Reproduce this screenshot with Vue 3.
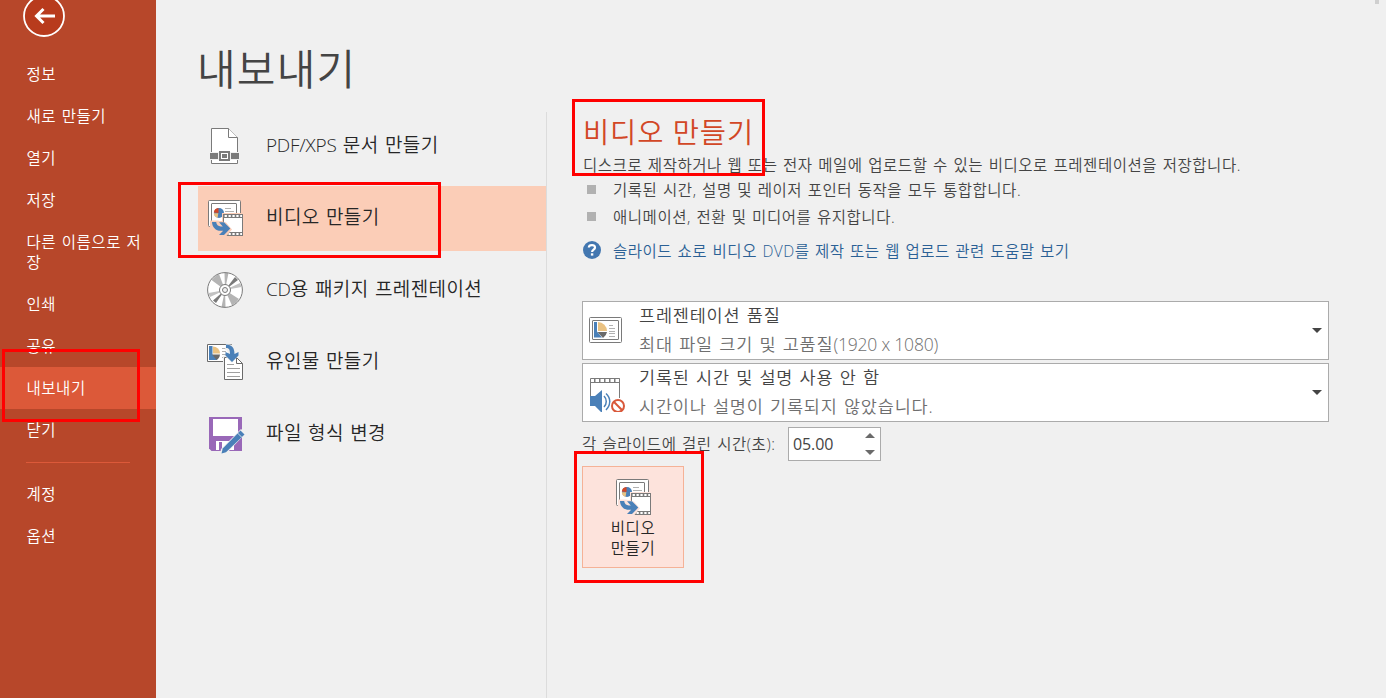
<script setup>
import { h } from 'vue'

const nav = ['정보', '새로 만들기', '열기', '저장', '다른 이름으로 저장', '인쇄', '공유', '내보내기', '닫기']
const navBottom = ['계정', '옵션']
const active = '내보내기'

const exportsList = [
  { id: 'pdf', latin: 'PDF/XPS', label: ' 문서 만들기' },
  { id: 'video', label: '비디오 만들기' },
  { id: 'cd', latin: 'CD', label: '용 패키지 프레젠테이션' },
  { id: 'handout', label: '유인물 만들기' },
  { id: 'file', label: '파일 형식 변경' },
]

const VideoIcon = (props) =>
  h('svg', { width: 36, height: 37, viewBox: '0 0 36 37' }, [
    h('rect', { x: 0.5, y: 0.5, width: 32, height: 26, rx: 1, fill: '#fff', stroke: '#7a7a7a' }),
    h('rect', { x: 3.5, y: 3.5, width: 25, height: 20, rx: 0.5, fill: '#fff', stroke: '#7a7a7a' }),
    h('circle', { cx: 11, cy: 13, r: 5, fill: '#4a80b8' }),
    h('path', { d: 'M10.5 13V8A5 5 0 0 0 5.8 12.6z', fill: '#d24726' }),
    h('path', { d: 'M10.3 13.2H5.8A5 5 0 0 0 9.6 17.8z', fill: '#eac282' }),
    h('path', { d: 'M17 8.5h6M17 11.5h9', stroke: '#b1b1b1' }),
    h('path', { d: 'M14 13h22v24H14z', fill: props.halo }),
    h('path', { d: 'M2 21h13v5l7 3-7 8H9L2 28z', fill: props.halo }),
    h('path', { d: 'M16 15h18v20H16z', fill: '#fff' }),
    h('path', { d: 'M15 14.5h20M15 17.5h20M15 32.5h20M15 35.5h20M15.5 14v21.5M34.5 14v22', stroke: '#7a7a7a', fill: 'none' }),
    h('path', { d: 'M15 16h20M15 34h20', stroke: '#7a7a7a', 'stroke-width': 2, 'stroke-dasharray': '1.6 2.3' }),
    h('path', { d: 'M2 20.5h8l8 2 6 7-6 7H9l-3-5-4-2z', fill: props.halo }),
    h('path', { d: 'M4 22h4.2c.2 2.8 2 4.4 4.6 4.4h2L11 22.3h5l6.3 6.3L16 35h-5l4.2-4.2h-2.5C7.8 30.8 4 27.2 4 22z', fill: '#4a80b8' }),
  ])
</script>

<template>
  <div class="app">
    <aside class="side">
      <svg class="back" width="44" height="38" viewBox="0 0 44 38">
        <circle cx="22" cy="16" r="20" fill="#b83b1d" stroke="#fff" stroke-width="1.800" />
        <path d="M33 16H14M21.500 9l-7 7 7 7" fill="none" stroke="#fff" stroke-width="3" />
      </svg>
      <nav>
        <div v-for="n in nav" :key="n" class="nav" :class="{ on: n === active }">{{ n }}</div>
        <div class="rule"></div>
        <div v-for="n in navBottom" :key="n" class="nav">{{ n }}</div>
      </nav>
      <div class="mark mark-nav"></div>
    </aside>

    <main class="main">
      <h1>내보내기</h1>
      <div class="cols">
        <section class="list">
          <div v-for="e in exportsList" :key="e.id" class="item" :class="{ sel: e.id === 'video' }">
            <span class="ico" :class="e.id">
              <svg v-if="e.id === 'pdf'" width="36" height="37" viewBox="0 0 36 37">
                <path d="M4.500 35.500v-35h17l9 9v26z" fill="#fff" stroke="#7a7a7a" />
                <path d="M21.500.500v9h9" fill="#fff" stroke="#7a7a7a" />
                <path d="M2 24h31v8H2z" fill="#f0f0f0" />
                <path d="M3 25h8v6H3zM24 25h8v6h-8z" fill="#7a7a7a" />
                <path d="M13 24h9v8h-9z" fill="#fff" stroke="#7a7a7a" stroke-width="2" />
                <path d="M15 26h5v4h-5z" fill="#7a7a7a" />
              </svg>
              <VideoIcon v-else-if="e.id === 'video'" halo="#fbcdb7" />
              <svg v-else-if="e.id === 'cd'" width="36" height="36" viewBox="0 0 36 36">
                <circle cx="18" cy="18" r="17.500" fill="#fff" />
                <path d="M18 18L4.500 8A17 17 0 0 1 12 2z" fill="#b4b4b4" />
                <path d="M18 18l-.500-17h4z" fill="#b4b4b4" />
                <path d="M18 18L28 5l3 3z" fill="#7a7a7a" />
                <path d="M18 18L33 11l1.500 4z" fill="#c2c2c2" />
                <path d="M18 18l14 9a17 17 0 0 1-7 6.500z" fill="#b4b4b4" />
                <path d="M18 18l.500 17h-4z" fill="#b4b4b4" />
                <path d="M18 18L9 31l-3-2.500z" fill="#7a7a7a" />
                <path d="M18 18L3 25l-1.500-4z" fill="#c2c2c2" />
                <circle cx="18" cy="18" r="17.400" fill="none" stroke="#7a7a7a" />
                <circle cx="18" cy="18" r="5.500" fill="#fff" stroke="#7a7a7a" />
                <circle cx="18" cy="18" r="2.500" fill="#f0f0f0" stroke="#7a7a7a" />
              </svg>
              <svg v-else-if="e.id === 'handout'" width="38" height="38" viewBox="0 0 38 38">
                <path d="M.500.500h24v17H.500z" fill="#fff" stroke="#6a6a6a" />
                <path d="M2 2h3.500v8.500l5 5.500H2z" fill="#4a80b8" />
                <path d="M6 2.500a7 7 0 0 1 7 7H6z" fill="#eac282" />
                <path d="M5 10.500h8a7 7 0 0 1-3.500 5.500z" fill="#6a6a6a" />
                <path d="M15 4.500h4M15 7.500h4M15 10.500h4M15 13.500h4" stroke="#b1b1b1" />
                <path d="M16 12h14l7 7v19H16z" fill="#f0f0f0" />
                <path d="M17.500 13.500h12l6 6v16h-18z" fill="#fff" stroke="#6a6a6a" />
                <path d="M29.500 13.500v6h6" fill="none" stroke="#6a6a6a" />
                <path d="M20 20.500h7M20 24.500h13M20 28.500h13M20 32.500h13" stroke="#a0a0a0" />
                <path d="M19 0c7 0 10 3 10 10h3.500L25 19l-8-8h4c0-4-1-5-3-5z" fill="#f0f0f0" />
                <path d="M19 .500c6 0 8.500 3.500 8.500 9.500l4-2v3.500L25 18l-6.500-6.500V8l4.500 2c0-4.500-1-6-4-6z" fill="#4a80b8" />
              </svg>
              <svg v-else width="38" height="38" viewBox="0 0 38 38">
                <path d="M2 1h33v34H4.500L2 32.500z" fill="#9968b8" />
                <path d="M6 3h25v17H6zM9 25h18v9H9z" fill="#fff" />
                <path d="M12 26h3v8h-3z" fill="#9968b8" />
                <path d="M34 13l5 4-20 21-6 1 1-6z" fill="#f0f0f0" />
                <path d="M33.500 14.500l4 4-18.500 17.700-4.500 1.300 1.200-5z" fill="#4a80b8" />
                <path d="M30.500 17l4 4" stroke="#f0f0f0" stroke-width=".8" />
              </svg>
            </span>
            <span class="lbl"><span v-if="e.latin" class="lat">{{ e.latin }}</span>{{ e.label }}</span>
          </div>
          <div class="mark mark-list"></div>
        </section>

        <section class="detail">
          <h2>비디오 만들기</h2>
          <p class="desc">디스크로 제작하거나 웹 또는 전자 메일에 업로드할 수 있는 비디오로 프레젠테이션을 저장합니다.</p>
          <ul>
            <li>기록된 시간, 설명 및 레이저 포인터 동작을 모두 통합합니다.</li>
            <li>애니메이션, 전환 및 미디어를 유지합니다.</li>
          </ul>
          <div class="help">
            <svg width="18" height="18" viewBox="0 0 18 18">
              <circle cx="9" cy="9" r="9" fill="#4377b0" />
              <path d="M5.800 6.500C6 3.200 12.200 3.200 12 6.600c-.100 2-2.900 2-2.900 4.300" fill="none" stroke="#fff" stroke-width="2.200" />
              <path d="M7.900 12.300h2.400v2.300H7.900z" fill="#fff" />
            </svg>
            <a>슬라이드 쇼로 비디오 DVD를 제작 또는 웹 업로드 관련 도움말 보기</a>
          </div>

          <div class="combo">
            <svg class="cico" width="36" height="38" viewBox="0 0 36 38">
              <rect x="0.500" y="6.500" width="32" height="25" rx="1" fill="#fff" stroke="#7a7a7a" />
              <rect x="3.500" y="9.500" width="26" height="19" rx=".5" fill="#fff" stroke="#7a7a7a" />
              <path d="M5 11h3v9.500l5 6H5z" fill="#4a80b8" />
              <path d="M9 11a9 9 0 0 1 9 9H9z" fill="#eac282" />
              <path d="M8.500 21H18a9 9 0 0 1-4 6z" fill="#6a6a6a" />
              <path d="M20 14.500h4M20 17.500h6M20 20.500h6M20 22.500h6M20 25.500h6" stroke="#b1b1b1" />
            </svg>
            <div class="ctext"><div>프레젠테이션 품질</div><div class="sub">최대 파일 크기 및 고품질<span class="lat">(1920 x 1080)</span></div></div>
            <i class="arrow"></i>
          </div>
          <div class="combo">
            <svg class="cico" width="38" height="38" viewBox="0 0 38 38">
              <path d="M2.500 24V4.500h29V24" fill="#fff" stroke="#7a7a7a" />
              <path d="M2 8.500h30" stroke="#7a7a7a" />
              <path d="M6 6.500h26" stroke="#7a7a7a" stroke-width="4" stroke-dasharray="1.500 3.500" />
              <path d="M2 22h5l7-6v23l-7-7H2z" fill="#4a80b8" />
              <path d="M16 22c3 3 3 8 0 11M18 19.500c5 4.500 5 11.500 0 16.500" fill="none" stroke="#4a80b8" stroke-width="1.500" />
              <circle cx="30" cy="32" r="8" fill="#fff" />
              <circle cx="30" cy="32" r="6" fill="none" stroke="#d9583a" stroke-width="2" />
              <path d="M25.800 27.800l8.400 8.400" stroke="#d9583a" stroke-width="2" />
            </svg>
            <div class="ctext"><div>기록된 시간 및 설명 사용 안 함</div><div class="sub">시간이나 설명이 기록되지 않았습니다.</div></div>
            <i class="arrow"></i>
          </div>

          <div class="time">
            <label>각 슬라이드에 걸린 시간(초):</label>
            <div class="spin"><span>05.00</span><span class="ud"><i class="up"></i><i class="down"></i></span></div>
          </div>

          <button class="make">
            <VideoIcon halo="#fde3dc" />
            <span>비디오<br />만들기</span>
          </button>
          <div class="mark mark-title"></div>
          <div class="mark mark-make"></div>
        </section>
      </div>
      <i class="nub"></i>
    </main>
  </div>
</template>

<style>
body { margin: 0; overflow: hidden; }
</style>

<style scoped>
.app { display: flex; position: relative; width: 1386px; height: 698px; overflow: hidden; background: #f0f0f0; color: #444; font-family: "Open Sans", "Noto Sans CJK KR", sans-serif; font-size: 15.500px; font-weight: 350; }
.side { width: 156px; flex: none; background: #b7472a; color: #fff; }
.back { display: block; margin-left: 22px; }
nav { padding-top: 15px; }
.nav { box-sizing: border-box; min-height: 42px; padding: 11px 11px 11px 26.500px; line-height: 20px; letter-spacing: .55px; word-spacing: 1px; word-break: break-all; }
.nav.on { background: #dc5939; }
.rule { height: 1px; margin: 11px 26px 10px; background: #dc5939; }
.main { flex: 1; min-width: 0; display: flex; flex-direction: column; }
h1 { margin: 0; height: 112px; box-sizing: border-box; padding: 37px 0 0 41px; font-size: 42px; line-height: 64px; font-weight: 350; letter-spacing: 1.200px; }
.cols { flex: 1; display: flex; }
.list { width: 350px; margin-left: 41px; padding-left: 1px; border-right: 1px solid #dcdcdc; box-sizing: border-box; padding-top: 2px; display: flex; flex-direction: column; gap: 7px; }
.item { display: flex; align-items: center; height: 65px; color: #262626; }
.item.sel { background: #fbcdb7; }
.ico { box-sizing: border-box; width: 68px; padding-left: 9px; display: flex; align-items: center; }
.ico.video { padding-left: 10px; }
.ico.cd { padding-bottom: 2px; }
.lbl { font-size: 19px; line-height: 28px; letter-spacing: .4px; word-spacing: 1px; padding-bottom: 3px; white-space: nowrap; }
.lbl .lat { letter-spacing: -.25px; }
.detail { padding-left: 35px; white-space: nowrap; }
h2 { margin: 0; padding-left: 1px; font-size: 28.500px; font-weight: 350; line-height: 40px; color: #d24726; letter-spacing: .9px; }
.desc { margin: 2px 0 0; line-height: 22px; padding-left: 1px; }
.desc, li, .help, label { font-size: 15.500px; letter-spacing: .55px; word-spacing: 1px; }
ul { margin: 0; padding: 0; list-style: none; }
li { display: flex; align-items: center; height: 27px; }
li::before { content: ""; width: 9px; height: 9px; margin: 0 17px 0 5px; background: #b1b1b1; }
.help { display: flex; align-items: center; gap: 12px; height: 36px; margin-top: 2px; color: #2b6095; padding-left: 1px; letter-spacing: .5px; }
.combo { box-sizing: border-box; width: 747px; height: 59px; margin-bottom: 3px; border: 1px solid #ababab; background: #fff; display: flex; align-items: center; }
.help + .combo { margin-top: 33px; }
.cico { width: 38px; padding-left: 5px; box-sizing: content-box; }
.help + .combo .cico { position: relative; top: -1px; }
.ctext { flex: 1; padding-left: 13px; padding-bottom: 2px; font-size: 17.500px; line-height: 29px; letter-spacing: .8px; word-spacing: 1px; }
.ctext .lat { letter-spacing: -.2px; word-spacing: 0; }
.sub { color: #6f6f6f; }
.arrow { border: 5px solid transparent; border-top-color: #444; border-bottom: 0; margin-right: 6px; }
.time { display: flex; align-items: center; margin-top: 5px; height: 34px; }
label { width: 206px; padding-bottom: 1px; }
.spin { box-sizing: border-box; width: 93px; height: 34px; border: 1px solid #ababab; background: #fff; display: flex; align-items: center; justify-content: space-between; padding: 0 5px 0 4px; font-size: 16px; font-weight: 400; letter-spacing: -.1px; }
.ud { display: flex; flex-direction: column; gap: 12px; }
.up, .down { border: 5px solid transparent; }
.up { border-bottom-color: #6a6a6a; border-top: 0; }
.down { border-top-color: #6a6a6a; border-bottom: 0; }
.make { display: flex; flex-direction: column; align-items: center; box-sizing: border-box; width: 102px; height: 102px; margin-top: 5px; padding: 12px 0 0; border: 1px solid #f5b297; background: #fde3dc; font: inherit; line-height: 20px; color: #262626; letter-spacing: .5px; }
.make svg { flex: none; margin-left: 2px; }
.make span { margin-top: 2px; }
.mark { position: absolute; box-sizing: border-box; border: 3px solid #f00; }
.mark-nav { left: 2px; top: 349px; width: 138px; height: 73px; }
.mark-list { left: 178px; top: 182px; width: 263px; height: 76px; }
.mark-title { left: 572px; top: 99px; width: 193px; height: 77px; }
.mark-make { left: 574px; top: 451px; width: 130px; height: 132px; }
.nub { position: absolute; left: 1375px; top: 0; width: 4px; height: 4px; background: #cfcfcf; }
</style>
